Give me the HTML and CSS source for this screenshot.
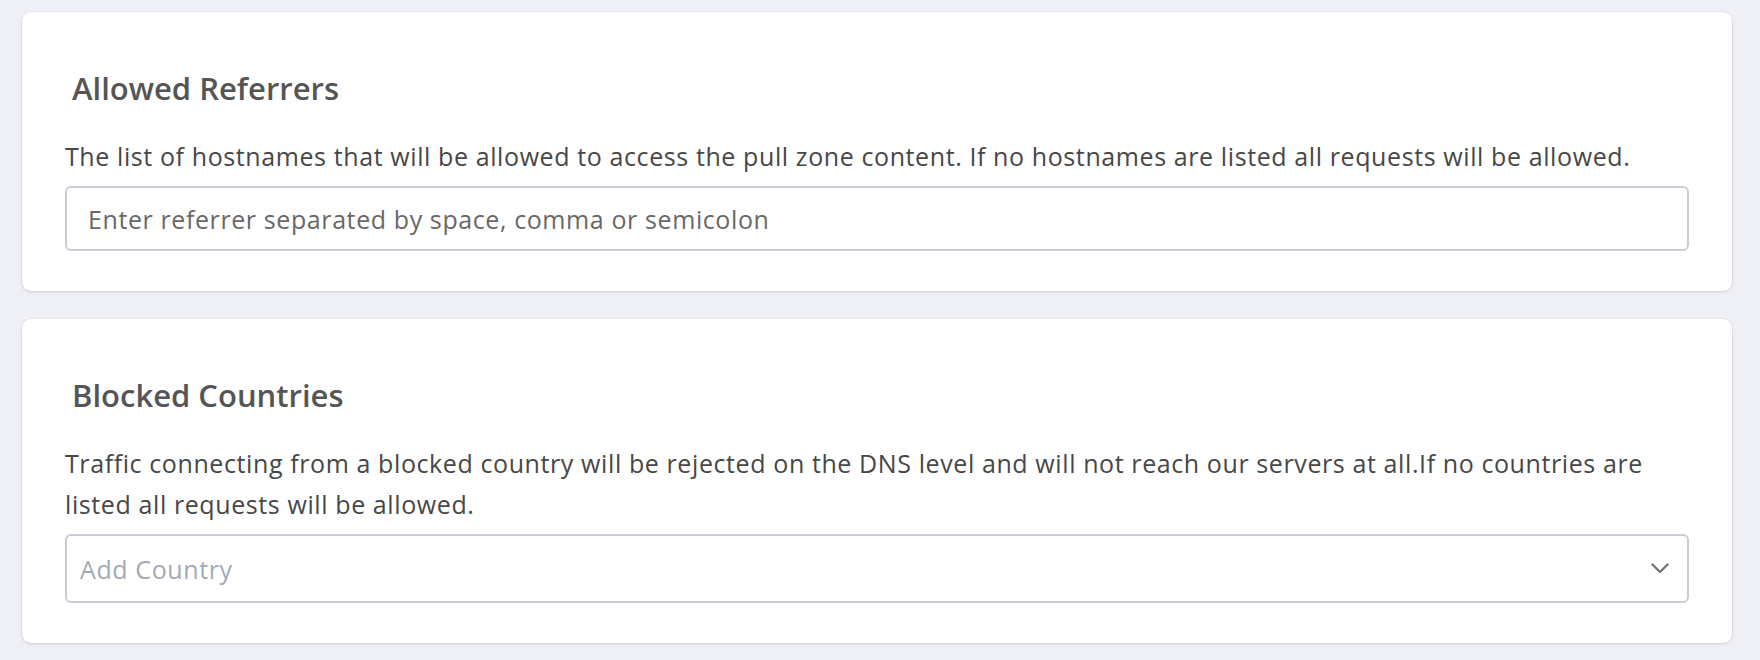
FILE: index.html
```html
<!DOCTYPE html>
<html lang="en">
<head>
<meta charset="utf-8">
<title>Pull zone security</title>
<link rel="stylesheet" href="styles.css">
</head>
<body>
<main class="page">
  <section class="card">
    <h2 class="card-title">Allowed Referrers</h2>
    <p class="card-desc">The list of hostnames that will be allowed to access the pull zone content. If no hostnames are listed all requests will be allowed.</p>
    <div class="text-input">Enter referrer separated by space, comma or semicolon</div>
  </section>
  <section class="card">
    <h2 class="card-title">Blocked Countries</h2>
    <p class="card-desc">Traffic connecting from a blocked country will be rejected on the DNS level and will not reach our servers at all.If no countries are listed all requests will be allowed.</p>
    <div class="select-input">
      <span class="select-placeholder">Add Country</span>
      <svg class="chevron" width="18" height="11" viewBox="0 0 18 11" aria-hidden="true"><path d="M1.5 1.5 L9 9 L16.5 1.5" fill="none" stroke="#6f6f7b" stroke-width="2.2" stroke-linecap="round" stroke-linejoin="round"/></svg>
    </div>
  </section>
</main>
</body>
</html>
```
FILE: styles.css
```css
* { box-sizing: border-box; }
html, body { margin: 0; padding: 0; }
body {
  background: #eff0f5;
  font-family: "Open Sans", Lato, "Liberation Sans", sans-serif;
  width: 1760px;
  height: 660px;
  overflow: hidden;
}
.page {
  display: flex;
  flex-direction: column;
  gap: 28px;
  padding: 12px 28px 0 22px;
}
.card {
  background: #ffffff;
  border-radius: 9px;
  box-shadow: 0 1px 3px rgba(60, 66, 90, 0.16), 0 0 0 1px rgba(60, 66, 90, 0.03);
  padding: 58px 43px 40px 43px;
}
.card-title {
  margin: 0 0 30px 7px;
  font-size: 31px;
  line-height: 36px;
  font-weight: 600;
  color: #555555;
}
.card-desc {
  margin: 0 0 9px 0;
  font-size: 25px;
  line-height: 41px;
  letter-spacing: 0.6px;
  color: #474747;
}
.text-input {
  height: 65px;
  border: 2px solid #c9cdd6;
  border-radius: 6px;
  padding: 0 21px;
  display: flex;
  align-items: center;
  font-size: 25px;
  letter-spacing: 0.6px;
  color: #686868;
}
.select-input {
  height: 69px;
  border: 2px solid #c9cbd5;
  border-radius: 6px;
  padding: 0 18px 0 13px;
  display: flex;
  align-items: center;
  justify-content: space-between;
  font-size: 25px;
  letter-spacing: 0.6px;
}
.select-placeholder { color: #a4a9b4; }
.chevron { display: block; }
```
